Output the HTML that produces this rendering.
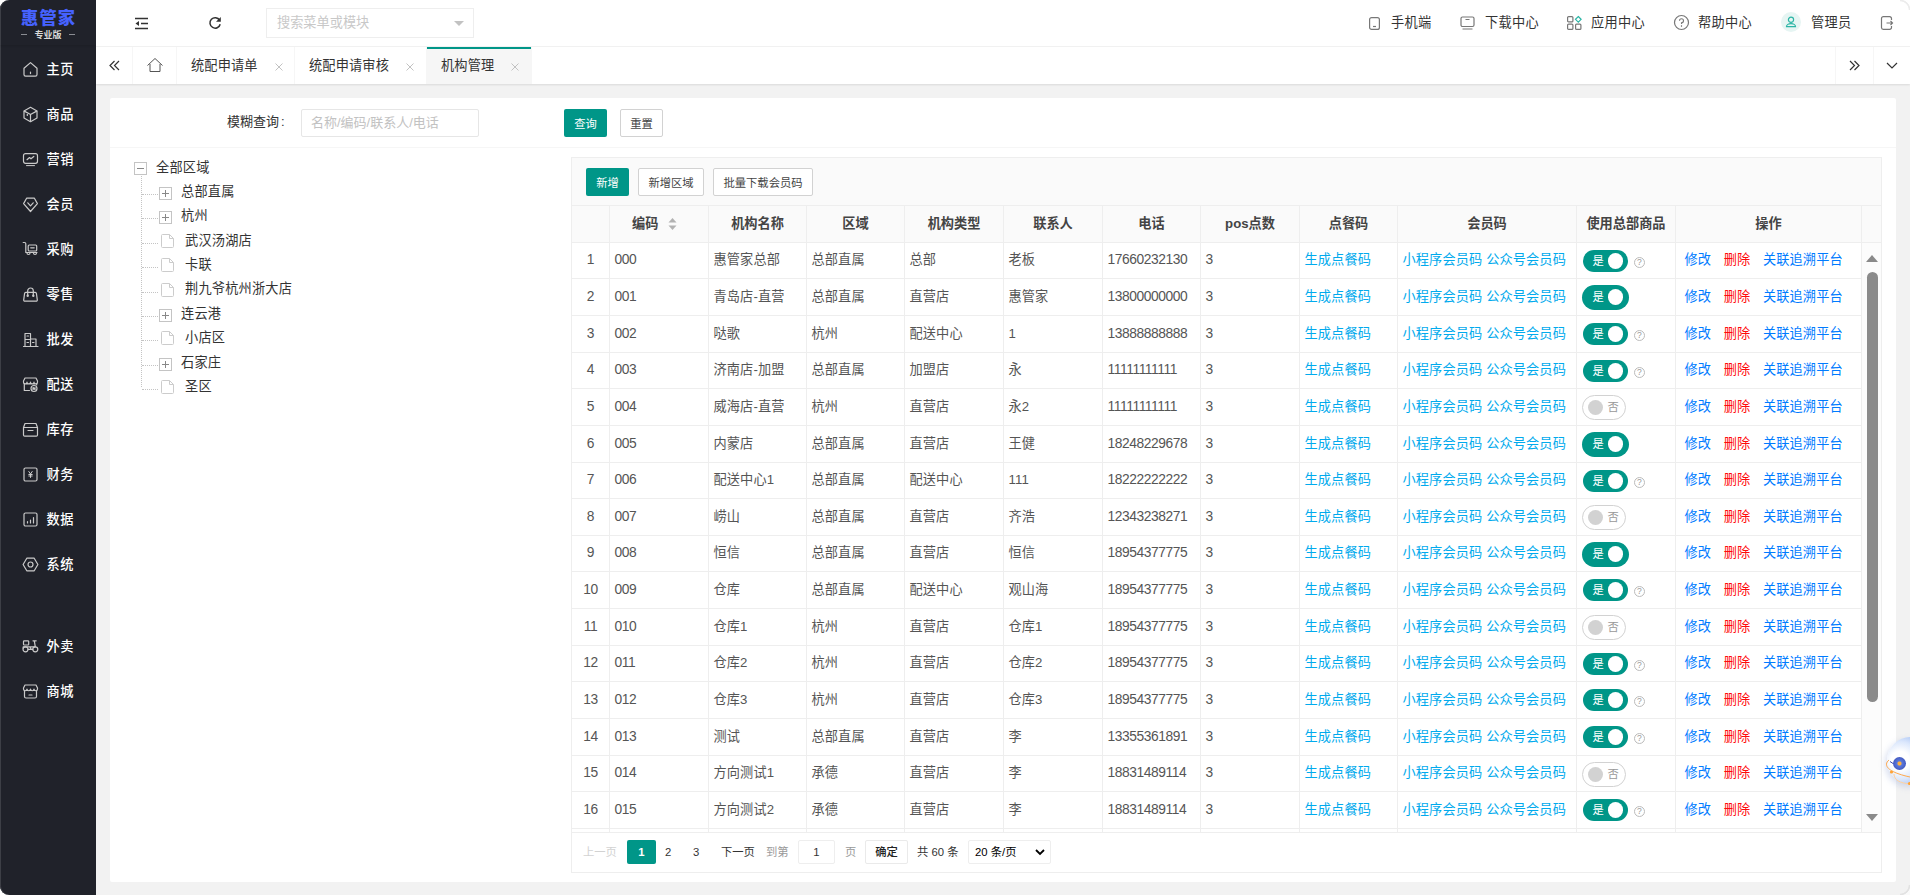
<!DOCTYPE html><html lang="zh-CN"><head><meta charset="utf-8"><title>惠管家</title><style>
*{box-sizing:border-box;margin:0;padding:0}
html,body{width:1910px;height:895px;overflow:hidden}
body{background:#f2f2f2;font-family:"Liberation Sans","Noto Sans CJK SC",sans-serif;font-size:13px;color:#333;position:relative}
.abs{position:absolute}
#sidebg{position:absolute;left:0;top:0;width:96px;height:895px;background:#fff}
#side{position:absolute;left:0;top:0;width:96px;height:895px;background:#20222a;border-radius:9px 0 0 9px;box-shadow:inset 1px 0 0 #3d3f46}
#logo{position:absolute;left:0;top:0;width:96px;height:45px;box-shadow:0 1px 2px rgba(0,0,0,.12)}
#logo .t1{position:absolute;left:0;top:6px;width:96px;text-align:center;color:#4662ff;font-size:17.2px;font-weight:900;line-height:24px;letter-spacing:1.1px;padding-left:1.1px}
#logo .t2{position:absolute;left:0;top:28.5px;width:96px;text-align:center;color:#d8d8d8;font-size:9px;font-weight:700;line-height:12px}
#logo .d{position:absolute;top:34px;width:6px;height:1px;background:#8a8c92}
.mi{position:absolute;left:0;width:96px;height:45px;color:#fff;font-size:13.2px;font-weight:500;line-height:48px}
.mi svg{position:absolute;left:22px;top:15px;width:17px;height:17px;overflow:visible}
.mi span{position:absolute;left:46.5px;top:0;letter-spacing:.6px}
#hd{position:absolute;left:96px;top:0;width:1814px;height:47px;background:#fff;border-bottom:1px solid #f2f2f2}
#hd .sch{position:absolute;left:170px;top:8px;width:208px;height:30px;border:1px solid #eee;color:#c8c8c8;font-size:13.2px;line-height:28px;padding-left:10px}
#hd .sch i{position:absolute;right:9px;top:12px;width:0;height:0;border:5px solid transparent;border-top:5px solid #c2c2c2;border-bottom:0}
.hi{position:absolute;top:0;height:46px;line-height:45px;font-size:13.2px;color:#333;white-space:nowrap;letter-spacing:.3px}
#tabs{position:absolute;left:96px;top:47px;width:1814px;height:37px;background:#fff;box-shadow:0 1px 2px rgba(0,0,0,.1)}
.tb{position:absolute;top:0;height:37px;border-right:1px solid #f6f6f6;line-height:38px;font-size:13.2px;color:#333;white-space:nowrap;letter-spacing:.15px}
.tb .x{position:absolute;top:15.5px;width:8px;height:8px}
.tb.on{background:#f6f6f6}
.tb.on:before{content:"";position:absolute;left:0;top:0;width:100%;height:2px;background:#009688}
#panel{position:absolute;left:110px;top:98px;width:1786px;height:784px;background:#fff;border-radius:2px}
#pin{position:absolute;left:0;top:-1px;width:1786px;height:785px}
.btn{position:absolute;height:28px;line-height:30px;text-align:center;font-size:11.3px;border-radius:2px;white-space:nowrap}
.btn.g{background:#009688;color:#fff}
.btn.w{background:#fff;border:1px solid #d2d2d2;color:#444;line-height:28px}
.inp{position:absolute;border:1px solid #e6e6e6;border-radius:2px;background:#fff}
.tr{position:absolute;left:24px;white-space:nowrap;font-size:13.2px;color:#333;line-height:20px;letter-spacing:.2px}
#tbl{position:absolute;left:571px;top:157px;width:1311px;height:716px;border:1px solid #eee;background:#fff;overflow:hidden}
#tool{position:absolute;left:0;top:0;width:1309px;height:48px;background:#fafafa;border-bottom:1px solid #eee}
#th{position:absolute;left:0;top:48px;width:1309px;height:37px;background:#fafafa;border-bottom:1px solid #eee}
.hc{position:absolute;top:0;height:36px;line-height:36px;text-align:center;font-weight:700;font-size:13.2px;color:#444;border-right:1px solid #eee}
.row{position:absolute;left:0;width:1290px;border-bottom:1px solid #eee}
.c{position:absolute;top:0;height:100%;border-right:1px solid #eee;line-height:34px;padding-left:4.5px;font-size:13.2px;color:#555;white-space:nowrap;overflow:hidden;letter-spacing:.12px}
.c.n{letter-spacing:-.42px;font-size:13.8px}
.row.o .c{padding-top:1px}
.lk{color:#01aaed}
.bl{color:#007bff}
.rd{color:#ff0a0a}
.sw{position:absolute;left:5px;top:6px;width:47px;height:25px;border-radius:13px;background:#009688;color:#fff;font-size:11.3px;line-height:25px;padding-left:10.5px}
.sw:after{content:"";position:absolute;left:25.5px;top:4px;width:15.5px;height:15.5px;border-radius:50%;background:#fff}
.sw.s{left:6px;top:7px;width:45px;height:22px;border-radius:11px;line-height:22px;padding-left:9.5px}
.sw.s:after{left:24.5px;top:3px}
.sw.off{background:#fff;border:1px solid #d2d2d2;color:#999;padding-left:24.5px;line-height:23px;width:44px;left:5px;top:6px}
.sw.off:after{left:5px;top:3.5px;width:15px;height:15px;background:#d2d2d2}
.q{position:absolute;left:57px;top:13.5px;width:11px;height:11px;border:1px solid #bbb;border-radius:50%;font-size:8.5px;line-height:9.5px;text-align:center;color:#999}
#pg{position:absolute;left:0;top:675px;width:1309px;height:40px;font-size:11.3px;color:#333}
#pg span{position:absolute;top:0;line-height:39px;white-space:nowrap}
</style></head><body>
<div id="sidebg"></div><div id="side"><div id="logo"><div class="t1">惠管家</div><div class="t2">专业版</div><div class="d" style="left:21px"></div><div class="d" style="left:69px"></div></div>
<div class="mi" style="top:46px"><svg viewBox="0 0 17 17" fill="none" stroke="#cacaca" stroke-width="1.2" stroke-linecap="round" stroke-linejoin="round"><path d="M2 7.2 8.5 1.6 15 7.2V13.6a1.6 1.6 0 0 1-1.6 1.6H3.6A1.6 1.6 0 0 1 2 13.6Z"/><path d="M8.5 11v1.6"/></svg><span>主页</span></div>
<div class="mi" style="top:91px"><svg viewBox="0 0 17 17" fill="none" stroke="#cacaca" stroke-width="1.2" stroke-linecap="round" stroke-linejoin="round"><path d="M8.5 1.3 15 4.9v7.2L8.5 15.7 2 12.1V4.9Z"/><path d="M2.3 5.1 8.5 8.5 14.7 5.1M8.5 8.5V15.5M5.3 6.8V9.5"/></svg><span>商品</span></div>
<div class="mi" style="top:136px"><svg viewBox="0 0 17 17" fill="none" stroke="#cacaca" stroke-width="1.2" stroke-linecap="round" stroke-linejoin="round"><rect x="1.5" y="2.7" width="14" height="9.6" rx="2"/><path d="M4.5 14.6h8" stroke-width="1"/><path d="M5 8.7 7.5 6.5 9 7.8 11.8 5.5"/></svg><span>营销</span></div>
<div class="mi" style="top:181px"><svg viewBox="0 0 17 17" fill="none" stroke="#cacaca" stroke-width="1.2" stroke-linecap="round" stroke-linejoin="round"><path d="M8.5 15.5 1.6 7.6 4.6 2.2H12.4L15.4 7.6Z"/><path d="M5.8 6.8 8.5 9.8 11.2 6.8"/></svg><span>会员</span></div>
<div class="mi" style="top:226px"><svg viewBox="0 0 17 17" fill="none" stroke="#cacaca" stroke-width="1.2" stroke-linecap="round" stroke-linejoin="round"><path d="M1.2 1.5H2.5A1.3 1.3 0 0 1 3.8 2.8V11.5H15"/><rect x="6.2" y="4" width="8.5" height="6" rx="1"/><path d="M8.7 6.8h3.5"/><path d="M5 12A1.5 1.5 0 0 0 8 12M11.5 12A1.5 1.5 0 0 0 14.5 12"/></svg><span>采购</span></div>
<div class="mi" style="top:271px"><svg viewBox="0 0 17 17" fill="none" stroke="#cacaca" stroke-width="1.2" stroke-linecap="round" stroke-linejoin="round"><path d="M3.8 6.3H13.2A1.2 1.2 0 0 1 14.4 7.3L15.3 13.8A1.2 1.2 0 0 1 14.1 15.2H2.9A1.2 1.2 0 0 1 1.7 13.8L2.6 7.3A1.2 1.2 0 0 1 3.8 6.3Z"/><path d="M5.7 9.5V4.8a2.8 2.8 0 0 1 5.6 0V9.5"/><circle cx="5.7" cy="9.7" r=".6"/><circle cx="11.3" cy="9.7" r=".6"/></svg><span>零售</span></div>
<div class="mi" style="top:316px"><svg viewBox="0 0 17 17" fill="none" stroke="#cacaca" stroke-width="1.2" stroke-linecap="round" stroke-linejoin="round"><path d="M1.5 15.5h14.5M3 15V2.5H8.5V15M8.5 8H14V15M3 8.5H8.5M5 5H6.5M5 11.5H6.5M10.5 11.5H12"/></svg><span>批发</span></div>
<div class="mi" style="top:361px"><svg viewBox="0 0 17 17" fill="none" stroke="#cacaca" stroke-width="1.2" stroke-linecap="round" stroke-linejoin="round"><path d="M2.3 7.5V14.5H7.5M14.7 7.5V9"/><path d="M1.5 5 3 2H14L15.5 5V6.2A1.7 1.7 0 0 1 12 6.2 1.7 1.7 0 0 1 8.5 6.2 1.7 1.7 0 0 1 5 6.2 1.7 1.7 0 0 1 1.5 6.2Z"/><circle cx="12" cy="12.5" r="3"/><path d="M11 13.5V11.5L13 13.5V11.5"/></svg><span>配送</span></div>
<div class="mi" style="top:406px"><svg viewBox="0 0 17 17" fill="none" stroke="#cacaca" stroke-width="1.2" stroke-linecap="round" stroke-linejoin="round"><path d="M1.5 6.5 3 2.5H14L15.5 6.5V14A1.2 1.2 0 0 1 14.3 15.2H2.7A1.2 1.2 0 0 1 1.5 14ZM1.5 6.5H15.5M6 9.5H11"/></svg><span>库存</span></div>
<div class="mi" style="top:451px"><svg viewBox="0 0 17 17" fill="none" stroke="#cacaca" stroke-width="1.2" stroke-linecap="round" stroke-linejoin="round"><rect x="2" y="2" width="13" height="13" rx="1.5"/><path d="M6.8 5.5 8.5 8 10.2 5.5M8.5 8V11.5M6.8 8.5H10.2M6.8 10H10.2" stroke-width="1"/></svg><span>财务</span></div>
<div class="mi" style="top:496px"><svg viewBox="0 0 17 17" fill="none" stroke="#cacaca" stroke-width="1.2" stroke-linecap="round" stroke-linejoin="round"><rect x="2" y="2" width="13" height="13" rx="1.5"/><path d="M5.5 12V10.5M8.5 12V9M11.5 12V6.5"/></svg><span>数据</span></div>
<div class="mi" style="top:541px"><svg viewBox="0 0 17 17" fill="none" stroke="#cacaca" stroke-width="1.2" stroke-linecap="round" stroke-linejoin="round"><path d="M4.8 2.2H12.2L15.9 8.5 12.2 14.8H4.8L1.1 8.5Z"/><circle cx="8.5" cy="8.5" r="2.5"/></svg><span>系统</span></div>
<div class="mi" style="top:623px"><svg viewBox="0 0 17 17" fill="none" stroke="#cacaca" stroke-width="1.2" stroke-linecap="round" stroke-linejoin="round"><rect x="1.5" y="2.8" width="5.2" height="4.2" rx=".8"/><path d="M1.2 10V8.8H7.8L9.2 11.3H10.8M11 2.8H14.2M12.3 2.8 13.3 8.8M6 11.3H9.2M7.8 8.8 12.8 8.8"/><circle cx="3.5" cy="11.3" r="2.5"/><circle cx="13.3" cy="11.3" r="2.5"/></svg><span>外卖</span></div>
<div class="mi" style="top:668px"><svg viewBox="0 0 17 17" fill="none" stroke="#cacaca" stroke-width="1.2" stroke-linecap="round" stroke-linejoin="round"><path d="M2.5 7.5V13.5A1.5 1.5 0 0 0 4 15H13A1.5 1.5 0 0 0 14.5 13.5V7.5"/><path d="M1.5 5 3 2H14L15.5 5V6A1.7 1.7 0 0 1 12 6 1.7 1.7 0 0 1 8.5 6 1.7 1.7 0 0 1 5 6 1.7 1.7 0 0 1 1.5 6Z"/><path d="M7 12H10"/></svg><span>商城</span></div>
</div>
<div id="hd">
<svg class="abs" style="left:38px;top:17px" width="15" height="13" viewBox="0 0 15 13"><path d="M1 1.5H14M7 6.5H14M1 11.5H14" stroke="#333" stroke-width="1.5" fill="none"/><path d="M1.5 6.5 5 4V9Z" fill="#333"/></svg>
<svg class="abs" style="left:112px;top:16px" width="14" height="14" viewBox="0 0 14 14"><path d="M11.6 4.2A5.2 5.2 0 1 0 12.2 8.2" stroke="#333" stroke-width="1.5" fill="none"/><path d="M12.8 1V5.8H8Z" fill="#333"/></svg>
<div class="sch">搜索菜单或模块<i></i></div>
<svg class="abs" style="left:1271px;top:15px" width="14" height="16" viewBox="0 0 14 16" fill="none" stroke="#777" stroke-width="1.2"><rect x="2.6" y="2.6" width="9.8" height="11.8" rx="2"/><path d="M6 11.5H9"/></svg>
<div class="hi" style="left:1295px">手机端</div>
<svg class="abs" style="left:1363px;top:15px" width="17" height="16" viewBox="0 0 17 16" fill="none" stroke="#777" stroke-width="1.2"><rect x="2" y="2" width="13" height="9.5" rx="1.5"/><path d="M6.5 4.5H10.5M3.5 14H13.5"/></svg>
<div class="hi" style="left:1389px">下载中心</div>
<svg class="abs" style="left:1470px;top:14px" width="17" height="17" viewBox="0 0 17 17" fill="none" stroke="#777" stroke-width="1.2"><rect x="1.6" y="2.6" width="5.3" height="5.3" rx="1"/><rect x="1.6" y="10.1" width="5.3" height="5.3" rx="1"/><rect x="9.6" y="10.1" width="5.3" height="5.3" rx="1"/><path d="M12.3 2.5 15.1 5.3 12.3 8.1 9.5 5.3Z" stroke="#2bb5a5"/></svg>
<div class="hi" style="left:1495px">应用中心</div>
<svg class="abs" style="left:1577px;top:14px" width="17" height="17" viewBox="0 0 17 17" fill="none" stroke="#777" stroke-width="1.2"><circle cx="8.5" cy="8.5" r="7"/><path d="M6.5 6.8A2 2 0 1 1 8.5 8.8V10" stroke-width="1.1"/><circle cx="8.5" cy="12" r=".7" fill="#555" stroke="none"/></svg>
<div class="hi" style="left:1602px">帮助中心</div>
<div class="abs" style="left:1685px;top:12px;width:20px;height:20px;border-radius:50%;background:#e6f5f3"></div>
<svg class="abs" style="left:1689px;top:16px" width="12" height="12" viewBox="0 0 12 12" fill="none" stroke="#2bb5a5" stroke-width="1.2"><circle cx="6" cy="3.8" r="2.6"/><path d="M1.5 10.6A4.5 3 0 0 1 10.5 10.6Z"/></svg>
<div class="hi" style="left:1715px">管理员</div>
<svg class="abs" style="left:1784px;top:15px" width="15" height="16" viewBox="0 0 15 16" fill="none" stroke="#777" stroke-width="1.2"><path d="M11.5 5V3.5A1.8 1.8 0 0 0 9.7 1.7H3.3A1.8 1.8 0 0 0 1.5 3.5V12.5A1.8 1.8 0 0 0 3.3 14.3H9.7A1.8 1.8 0 0 0 11.5 12.5V11"/><path d="M6.5 8H12.5M10.5 6 12.5 8 10.5 10"/></svg>
</div>
<div id="tabs">
<div class="tb" style="left:0;width:37px"><svg class="abs" style="left:13px;top:13px" width="11" height="11" viewBox="0 0 11 11" fill="none" stroke="#333" stroke-width="1.2"><path d="M5.5 1 1 5.5 5.5 10M10 1 5.5 5.5 10 10"/></svg></div>
<div class="tb" style="left:37px;width:44px"><svg class="abs" style="left:13px;top:10px" width="18" height="17" viewBox="0 0 18 17" fill="none" stroke="#555" stroke-width="1"><path d="M1.5 8.5 9 1.5 16.5 8.5M4 7V14.5H14V7"/></svg></div>
<div class="tb" style="left:81px;width:118px"><span class="abs" style="left:14px">统配申请单</span><svg class="x" style="left:98px" viewBox="0 0 8 8"><path d="M.5.5 7.5 7.5M7.5.5.5 7.5" stroke="#c2c2c2" stroke-width="1" fill="none"/></svg></div>
<div class="tb" style="left:199px;width:132px"><span class="abs" style="left:14px">统配申请审核</span><svg class="x" style="left:111px" viewBox="0 0 8 8"><path d="M.5.5 7.5 7.5M7.5.5.5 7.5" stroke="#c2c2c2" stroke-width="1" fill="none"/></svg></div>
<div class="tb on" style="left:331px;width:105px"><span class="abs" style="left:14px">机构管理</span><svg class="x" style="left:84px" viewBox="0 0 8 8"><path d="M.5.5 7.5 7.5M7.5.5.5 7.5" stroke="#c2c2c2" stroke-width="1" fill="none"/></svg></div>
<div class="tb" style="left:1739px;width:39px;border-left:1px solid #f6f6f6"><svg class="abs" style="left:13px;top:13px" width="11" height="11" viewBox="0 0 11 11" fill="none" stroke="#333" stroke-width="1.2"><path d="M1 1 5.5 5.5 1 10M5.5 1 10 5.5 5.5 10"/></svg></div>
<div class="tb" style="left:1778px;width:36px;border:0"><svg class="abs" style="left:12px;top:15px" width="12" height="7" viewBox="0 0 12 7" fill="none" stroke="#333" stroke-width="1.2"><path d="M1 1 6 6 11 1"/></svg></div>
</div>
<div id="panel"><div id="pin">
<div class="abs" style="left:0;top:50px;width:1786px;height:1px;background:#f6f6f6"></div>
<div class="abs" style="left:117px;top:15px;font-size:13px;line-height:20px;color:#333">模糊查询<span style="margin-left:2px">:</span></div>
<div class="inp" style="left:191px;top:12px;width:178px;height:28px;color:#c2c2c2;font-size:13px;line-height:26px;padding-left:9px">名称/编码/联系人/电话</div>
<div class="btn g" style="left:454px;top:12px;width:43px">查询</div>
<div class="btn w" style="left:510px;top:12px;width:43px">重置</div>
<svg class="abs" style="left:24px;top:65px" width="13" height="13" viewBox="0 0 13 13" fill="none"><rect x=".5" y=".5" width="12" height="12" stroke="#c4c4c4"/><path d="M3 6.5H10" stroke="#888" stroke-width="1"/></svg>
<div class="tr" style="left:46px;top:60.6px">全部区域</div>
<div class="abs" style="left:31px;top:79px;width:0;height:211px;border-left:1px dotted #c4c4c4"></div>
<div class="abs" style="left:32px;top:97px;width:16px;height:0;border-top:1px dotted #c4c4c4"></div>
<svg class="abs" style="left:49px;top:90px" width="13" height="13" viewBox="0 0 13 13" fill="none"><rect x=".5" y=".5" width="12" height="12" stroke="#c4c4c4"/><path d="M3 6.5H10M6.5 3V10" stroke="#888" stroke-width="1"/></svg>
<div class="tr" style="left:71px;top:84.7px">总部直属</div>
<div class="abs" style="left:32px;top:121.4px;width:16px;height:0;border-top:1px dotted #c4c4c4"></div>
<svg class="abs" style="left:49px;top:114px" width="13" height="13" viewBox="0 0 13 13" fill="none"><rect x=".5" y=".5" width="12" height="12" stroke="#c4c4c4"/><path d="M3 6.5H10M6.5 3V10" stroke="#888" stroke-width="1"/></svg>
<div class="tr" style="left:71px;top:109.1px">杭州</div>
<div class="abs" style="left:32px;top:145.8px;width:16px;height:0;border-top:1px dotted #c4c4c4"></div>
<svg class="abs" style="left:51px;top:137px" width="13" height="14" viewBox="0 0 13 14" fill="none" stroke="#ccc"><path d="M1.5.5H8.5L12.5 4.5V12.5a1 1 0 0 1-1 1H1.5a1 1 0 0 1-1-1V1.5a1 1 0 0 1 1-1ZM8.5.5V4.5H12.5"/></svg>
<div class="tr" style="left:75px;top:133.5px">武汉汤湖店</div>
<div class="abs" style="left:32px;top:170.2px;width:16px;height:0;border-top:1px dotted #c4c4c4"></div>
<svg class="abs" style="left:51px;top:161px" width="13" height="14" viewBox="0 0 13 14" fill="none" stroke="#ccc"><path d="M1.5.5H8.5L12.5 4.5V12.5a1 1 0 0 1-1 1H1.5a1 1 0 0 1-1-1V1.5a1 1 0 0 1 1-1ZM8.5.5V4.5H12.5"/></svg>
<div class="tr" style="left:75px;top:157.9px">卡联</div>
<div class="abs" style="left:32px;top:194.6px;width:16px;height:0;border-top:1px dotted #c4c4c4"></div>
<svg class="abs" style="left:51px;top:186px" width="13" height="14" viewBox="0 0 13 14" fill="none" stroke="#ccc"><path d="M1.5.5H8.5L12.5 4.5V12.5a1 1 0 0 1-1 1H1.5a1 1 0 0 1-1-1V1.5a1 1 0 0 1 1-1ZM8.5.5V4.5H12.5"/></svg>
<div class="tr" style="left:75px;top:182.3px">荆九爷杭州浙大店</div>
<div class="abs" style="left:32px;top:219px;width:16px;height:0;border-top:1px dotted #c4c4c4"></div>
<svg class="abs" style="left:49px;top:212px" width="13" height="13" viewBox="0 0 13 13" fill="none"><rect x=".5" y=".5" width="12" height="12" stroke="#c4c4c4"/><path d="M3 6.5H10M6.5 3V10" stroke="#888" stroke-width="1"/></svg>
<div class="tr" style="left:71px;top:206.7px">连云港</div>
<div class="abs" style="left:32px;top:243.4px;width:16px;height:0;border-top:1px dotted #c4c4c4"></div>
<svg class="abs" style="left:51px;top:234px" width="13" height="14" viewBox="0 0 13 14" fill="none" stroke="#ccc"><path d="M1.5.5H8.5L12.5 4.5V12.5a1 1 0 0 1-1 1H1.5a1 1 0 0 1-1-1V1.5a1 1 0 0 1 1-1ZM8.5.5V4.5H12.5"/></svg>
<div class="tr" style="left:75px;top:231.1px">小店区</div>
<div class="abs" style="left:32px;top:267.8px;width:16px;height:0;border-top:1px dotted #c4c4c4"></div>
<svg class="abs" style="left:49px;top:261px" width="13" height="13" viewBox="0 0 13 13" fill="none"><rect x=".5" y=".5" width="12" height="12" stroke="#c4c4c4"/><path d="M3 6.5H10M6.5 3V10" stroke="#888" stroke-width="1"/></svg>
<div class="tr" style="left:71px;top:255.5px">石家庄</div>
<div class="abs" style="left:32px;top:292.2px;width:16px;height:0;border-top:1px dotted #c4c4c4"></div>
<svg class="abs" style="left:51px;top:283px" width="13" height="14" viewBox="0 0 13 14" fill="none" stroke="#ccc"><path d="M1.5.5H8.5L12.5 4.5V12.5a1 1 0 0 1-1 1H1.5a1 1 0 0 1-1-1V1.5a1 1 0 0 1 1-1ZM8.5.5V4.5H12.5"/></svg>
<div class="tr" style="left:75px;top:279.9px">圣区</div>
</div></div>
<div id="tbl"><div id="tool">
<div class="btn g" style="left:14px;top:10px;width:43px">新增</div>
<div class="btn w" style="left:66px;top:10px;width:66px">新增区域</div>
<div class="btn w" style="left:141px;top:10px;width:100px">批量下载会员码</div>
</div><div id="th">
<div class="hc" style="left:0px;width:38px"></div>
<div class="hc" style="left:38px;width:99px;text-align:left;padding-left:22px">编码<svg style="position:absolute;left:58px;top:12px" width="9" height="12" viewBox="0 0 9 12"><path d="M4.5 0 8.5 4.5H.5Z" fill="#b2b2b2"/><path d="M4.5 12 8.5 7.5H.5Z" fill="#b2b2b2"/></svg></div>
<div class="hc" style="left:137px;width:98px">机构名称</div>
<div class="hc" style="left:235px;width:98px">区域</div>
<div class="hc" style="left:333px;width:99px">机构类型</div>
<div class="hc" style="left:432px;width:99px">联系人</div>
<div class="hc" style="left:531px;width:98px">电话</div>
<div class="hc" style="left:629px;width:99px">pos点数</div>
<div class="hc" style="left:728px;width:98px">点餐码</div>
<div class="hc" style="left:826px;width:179px">会员码</div>
<div class="hc" style="left:1005px;width:99px">使用总部商品</div>
<div class="hc" style="left:1104px;width:186px">操作</div>
</div>
<div class="abs" style="left:0;top:85px;width:1290px;height:589px;overflow:hidden">
<div class="row" style="top:0px;height:36px">
<div class="c n" style="left:0px;width:38px;text-align:center;padding-left:0">1</div>
<div class="c n" style="left:38px;width:99px">000</div>
<div class="c" style="left:137px;width:98px">惠管家总部</div>
<div class="c" style="left:235px;width:98px">总部直属</div>
<div class="c" style="left:333px;width:99px">总部</div>
<div class="c" style="left:432px;width:99px">老板</div>
<div class="c n" style="left:531px;width:98px">17660232130</div>
<div class="c n" style="left:629px;width:99px">3</div>
<div class="c lk" style="left:728px;width:98px">生成点餐码</div>
<div class="c lk" style="left:826px;width:179px">小程序会员码 公众号会员码</div>
<div class="c" style="left:1005px;width:99px"><div class="sw s">是</div><div class="q">?</div></div>
<div class="c" style="left:1104px;width:186px;padding-left:8.5px"><span class="bl">修改</span><span class="rd" style="margin-left:12.6px">删除</span><span class="bl" style="margin-left:12.6px">关联追溯平台</span></div>
</div>
<div class="row o" style="top:36px;height:37px">
<div class="c n" style="left:0px;width:38px;text-align:center;padding-left:0">2</div>
<div class="c n" style="left:38px;width:99px">001</div>
<div class="c" style="left:137px;width:98px">青岛店-直营</div>
<div class="c" style="left:235px;width:98px">总部直属</div>
<div class="c" style="left:333px;width:99px">直营店</div>
<div class="c" style="left:432px;width:99px">惠管家</div>
<div class="c n" style="left:531px;width:98px">13800000000</div>
<div class="c n" style="left:629px;width:99px">3</div>
<div class="c lk" style="left:728px;width:98px">生成点餐码</div>
<div class="c lk" style="left:826px;width:179px">小程序会员码 公众号会员码</div>
<div class="c" style="left:1005px;width:99px"><div class="sw">是</div></div>
<div class="c" style="left:1104px;width:186px;padding-left:8.5px"><span class="bl">修改</span><span class="rd" style="margin-left:12.6px">删除</span><span class="bl" style="margin-left:12.6px">关联追溯平台</span></div>
</div>
<div class="row o" style="top:73px;height:37px">
<div class="c n" style="left:0px;width:38px;text-align:center;padding-left:0">3</div>
<div class="c n" style="left:38px;width:99px">002</div>
<div class="c" style="left:137px;width:98px">哒歌</div>
<div class="c" style="left:235px;width:98px">杭州</div>
<div class="c" style="left:333px;width:99px">配送中心</div>
<div class="c" style="left:432px;width:99px">1</div>
<div class="c n" style="left:531px;width:98px">13888888888</div>
<div class="c n" style="left:629px;width:99px">3</div>
<div class="c lk" style="left:728px;width:98px">生成点餐码</div>
<div class="c lk" style="left:826px;width:179px">小程序会员码 公众号会员码</div>
<div class="c" style="left:1005px;width:99px"><div class="sw s">是</div><div class="q">?</div></div>
<div class="c" style="left:1104px;width:186px;padding-left:8.5px"><span class="bl">修改</span><span class="rd" style="margin-left:12.6px">删除</span><span class="bl" style="margin-left:12.6px">关联追溯平台</span></div>
</div>
<div class="row" style="top:110px;height:36px">
<div class="c n" style="left:0px;width:38px;text-align:center;padding-left:0">4</div>
<div class="c n" style="left:38px;width:99px">003</div>
<div class="c" style="left:137px;width:98px">济南店-加盟</div>
<div class="c" style="left:235px;width:98px">总部直属</div>
<div class="c" style="left:333px;width:99px">加盟店</div>
<div class="c" style="left:432px;width:99px">永</div>
<div class="c n" style="left:531px;width:98px">11111111111</div>
<div class="c n" style="left:629px;width:99px">3</div>
<div class="c lk" style="left:728px;width:98px">生成点餐码</div>
<div class="c lk" style="left:826px;width:179px">小程序会员码 公众号会员码</div>
<div class="c" style="left:1005px;width:99px"><div class="sw s">是</div><div class="q">?</div></div>
<div class="c" style="left:1104px;width:186px;padding-left:8.5px"><span class="bl">修改</span><span class="rd" style="margin-left:12.6px">删除</span><span class="bl" style="margin-left:12.6px">关联追溯平台</span></div>
</div>
<div class="row o" style="top:146px;height:37px">
<div class="c n" style="left:0px;width:38px;text-align:center;padding-left:0">5</div>
<div class="c n" style="left:38px;width:99px">004</div>
<div class="c" style="left:137px;width:98px">威海店-直营</div>
<div class="c" style="left:235px;width:98px">杭州</div>
<div class="c" style="left:333px;width:99px">直营店</div>
<div class="c" style="left:432px;width:99px">永2</div>
<div class="c n" style="left:531px;width:98px">11111111111</div>
<div class="c n" style="left:629px;width:99px">3</div>
<div class="c lk" style="left:728px;width:98px">生成点餐码</div>
<div class="c lk" style="left:826px;width:179px">小程序会员码 公众号会员码</div>
<div class="c" style="left:1005px;width:99px"><div class="sw off">否</div></div>
<div class="c" style="left:1104px;width:186px;padding-left:8.5px"><span class="bl">修改</span><span class="rd" style="margin-left:12.6px">删除</span><span class="bl" style="margin-left:12.6px">关联追溯平台</span></div>
</div>
<div class="row o" style="top:183px;height:37px">
<div class="c n" style="left:0px;width:38px;text-align:center;padding-left:0">6</div>
<div class="c n" style="left:38px;width:99px">005</div>
<div class="c" style="left:137px;width:98px">内蒙店</div>
<div class="c" style="left:235px;width:98px">总部直属</div>
<div class="c" style="left:333px;width:99px">直营店</div>
<div class="c" style="left:432px;width:99px">王健</div>
<div class="c n" style="left:531px;width:98px">18248229678</div>
<div class="c n" style="left:629px;width:99px">3</div>
<div class="c lk" style="left:728px;width:98px">生成点餐码</div>
<div class="c lk" style="left:826px;width:179px">小程序会员码 公众号会员码</div>
<div class="c" style="left:1005px;width:99px"><div class="sw">是</div></div>
<div class="c" style="left:1104px;width:186px;padding-left:8.5px"><span class="bl">修改</span><span class="rd" style="margin-left:12.6px">删除</span><span class="bl" style="margin-left:12.6px">关联追溯平台</span></div>
</div>
<div class="row" style="top:220px;height:36px">
<div class="c n" style="left:0px;width:38px;text-align:center;padding-left:0">7</div>
<div class="c n" style="left:38px;width:99px">006</div>
<div class="c" style="left:137px;width:98px">配送中心1</div>
<div class="c" style="left:235px;width:98px">总部直属</div>
<div class="c" style="left:333px;width:99px">配送中心</div>
<div class="c" style="left:432px;width:99px">111</div>
<div class="c n" style="left:531px;width:98px">18222222222</div>
<div class="c n" style="left:629px;width:99px">3</div>
<div class="c lk" style="left:728px;width:98px">生成点餐码</div>
<div class="c lk" style="left:826px;width:179px">小程序会员码 公众号会员码</div>
<div class="c" style="left:1005px;width:99px"><div class="sw s">是</div><div class="q">?</div></div>
<div class="c" style="left:1104px;width:186px;padding-left:8.5px"><span class="bl">修改</span><span class="rd" style="margin-left:12.6px">删除</span><span class="bl" style="margin-left:12.6px">关联追溯平台</span></div>
</div>
<div class="row o" style="top:256px;height:37px">
<div class="c n" style="left:0px;width:38px;text-align:center;padding-left:0">8</div>
<div class="c n" style="left:38px;width:99px">007</div>
<div class="c" style="left:137px;width:98px">崂山</div>
<div class="c" style="left:235px;width:98px">总部直属</div>
<div class="c" style="left:333px;width:99px">直营店</div>
<div class="c" style="left:432px;width:99px">齐浩</div>
<div class="c n" style="left:531px;width:98px">12343238271</div>
<div class="c n" style="left:629px;width:99px">3</div>
<div class="c lk" style="left:728px;width:98px">生成点餐码</div>
<div class="c lk" style="left:826px;width:179px">小程序会员码 公众号会员码</div>
<div class="c" style="left:1005px;width:99px"><div class="sw off">否</div></div>
<div class="c" style="left:1104px;width:186px;padding-left:8.5px"><span class="bl">修改</span><span class="rd" style="margin-left:12.6px">删除</span><span class="bl" style="margin-left:12.6px">关联追溯平台</span></div>
</div>
<div class="row" style="top:293px;height:36px">
<div class="c n" style="left:0px;width:38px;text-align:center;padding-left:0">9</div>
<div class="c n" style="left:38px;width:99px">008</div>
<div class="c" style="left:137px;width:98px">恒信</div>
<div class="c" style="left:235px;width:98px">总部直属</div>
<div class="c" style="left:333px;width:99px">直营店</div>
<div class="c" style="left:432px;width:99px">恒信</div>
<div class="c n" style="left:531px;width:98px">18954377775</div>
<div class="c n" style="left:629px;width:99px">3</div>
<div class="c lk" style="left:728px;width:98px">生成点餐码</div>
<div class="c lk" style="left:826px;width:179px">小程序会员码 公众号会员码</div>
<div class="c" style="left:1005px;width:99px"><div class="sw">是</div></div>
<div class="c" style="left:1104px;width:186px;padding-left:8.5px"><span class="bl">修改</span><span class="rd" style="margin-left:12.6px">删除</span><span class="bl" style="margin-left:12.6px">关联追溯平台</span></div>
</div>
<div class="row o" style="top:329px;height:37px">
<div class="c n" style="left:0px;width:38px;text-align:center;padding-left:0">10</div>
<div class="c n" style="left:38px;width:99px">009</div>
<div class="c" style="left:137px;width:98px">仓库</div>
<div class="c" style="left:235px;width:98px">总部直属</div>
<div class="c" style="left:333px;width:99px">配送中心</div>
<div class="c" style="left:432px;width:99px">观山海</div>
<div class="c n" style="left:531px;width:98px">18954377775</div>
<div class="c n" style="left:629px;width:99px">3</div>
<div class="c lk" style="left:728px;width:98px">生成点餐码</div>
<div class="c lk" style="left:826px;width:179px">小程序会员码 公众号会员码</div>
<div class="c" style="left:1005px;width:99px"><div class="sw s">是</div><div class="q">?</div></div>
<div class="c" style="left:1104px;width:186px;padding-left:8.5px"><span class="bl">修改</span><span class="rd" style="margin-left:12.6px">删除</span><span class="bl" style="margin-left:12.6px">关联追溯平台</span></div>
</div>
<div class="row o" style="top:366px;height:37px">
<div class="c n" style="left:0px;width:38px;text-align:center;padding-left:0">11</div>
<div class="c n" style="left:38px;width:99px">010</div>
<div class="c" style="left:137px;width:98px">仓库1</div>
<div class="c" style="left:235px;width:98px">杭州</div>
<div class="c" style="left:333px;width:99px">直营店</div>
<div class="c" style="left:432px;width:99px">仓库1</div>
<div class="c n" style="left:531px;width:98px">18954377775</div>
<div class="c n" style="left:629px;width:99px">3</div>
<div class="c lk" style="left:728px;width:98px">生成点餐码</div>
<div class="c lk" style="left:826px;width:179px">小程序会员码 公众号会员码</div>
<div class="c" style="left:1005px;width:99px"><div class="sw off">否</div></div>
<div class="c" style="left:1104px;width:186px;padding-left:8.5px"><span class="bl">修改</span><span class="rd" style="margin-left:12.6px">删除</span><span class="bl" style="margin-left:12.6px">关联追溯平台</span></div>
</div>
<div class="row" style="top:403px;height:36px">
<div class="c n" style="left:0px;width:38px;text-align:center;padding-left:0">12</div>
<div class="c n" style="left:38px;width:99px">011</div>
<div class="c" style="left:137px;width:98px">仓库2</div>
<div class="c" style="left:235px;width:98px">杭州</div>
<div class="c" style="left:333px;width:99px">直营店</div>
<div class="c" style="left:432px;width:99px">仓库2</div>
<div class="c n" style="left:531px;width:98px">18954377775</div>
<div class="c n" style="left:629px;width:99px">3</div>
<div class="c lk" style="left:728px;width:98px">生成点餐码</div>
<div class="c lk" style="left:826px;width:179px">小程序会员码 公众号会员码</div>
<div class="c" style="left:1005px;width:99px"><div class="sw s">是</div><div class="q">?</div></div>
<div class="c" style="left:1104px;width:186px;padding-left:8.5px"><span class="bl">修改</span><span class="rd" style="margin-left:12.6px">删除</span><span class="bl" style="margin-left:12.6px">关联追溯平台</span></div>
</div>
<div class="row o" style="top:439px;height:37px">
<div class="c n" style="left:0px;width:38px;text-align:center;padding-left:0">13</div>
<div class="c n" style="left:38px;width:99px">012</div>
<div class="c" style="left:137px;width:98px">仓库3</div>
<div class="c" style="left:235px;width:98px">杭州</div>
<div class="c" style="left:333px;width:99px">直营店</div>
<div class="c" style="left:432px;width:99px">仓库3</div>
<div class="c n" style="left:531px;width:98px">18954377775</div>
<div class="c n" style="left:629px;width:99px">3</div>
<div class="c lk" style="left:728px;width:98px">生成点餐码</div>
<div class="c lk" style="left:826px;width:179px">小程序会员码 公众号会员码</div>
<div class="c" style="left:1005px;width:99px"><div class="sw s">是</div><div class="q">?</div></div>
<div class="c" style="left:1104px;width:186px;padding-left:8.5px"><span class="bl">修改</span><span class="rd" style="margin-left:12.6px">删除</span><span class="bl" style="margin-left:12.6px">关联追溯平台</span></div>
</div>
<div class="row o" style="top:476px;height:37px">
<div class="c n" style="left:0px;width:38px;text-align:center;padding-left:0">14</div>
<div class="c n" style="left:38px;width:99px">013</div>
<div class="c" style="left:137px;width:98px">测试</div>
<div class="c" style="left:235px;width:98px">总部直属</div>
<div class="c" style="left:333px;width:99px">直营店</div>
<div class="c" style="left:432px;width:99px">李</div>
<div class="c n" style="left:531px;width:98px">13355361891</div>
<div class="c n" style="left:629px;width:99px">3</div>
<div class="c lk" style="left:728px;width:98px">生成点餐码</div>
<div class="c lk" style="left:826px;width:179px">小程序会员码 公众号会员码</div>
<div class="c" style="left:1005px;width:99px"><div class="sw s">是</div><div class="q">?</div></div>
<div class="c" style="left:1104px;width:186px;padding-left:8.5px"><span class="bl">修改</span><span class="rd" style="margin-left:12.6px">删除</span><span class="bl" style="margin-left:12.6px">关联追溯平台</span></div>
</div>
<div class="row" style="top:513px;height:36px">
<div class="c n" style="left:0px;width:38px;text-align:center;padding-left:0">15</div>
<div class="c n" style="left:38px;width:99px">014</div>
<div class="c" style="left:137px;width:98px">方向测试1</div>
<div class="c" style="left:235px;width:98px">承德</div>
<div class="c" style="left:333px;width:99px">直营店</div>
<div class="c" style="left:432px;width:99px">李</div>
<div class="c n" style="left:531px;width:98px">18831489114</div>
<div class="c n" style="left:629px;width:99px">3</div>
<div class="c lk" style="left:728px;width:98px">生成点餐码</div>
<div class="c lk" style="left:826px;width:179px">小程序会员码 公众号会员码</div>
<div class="c" style="left:1005px;width:99px"><div class="sw off">否</div></div>
<div class="c" style="left:1104px;width:186px;padding-left:8.5px"><span class="bl">修改</span><span class="rd" style="margin-left:12.6px">删除</span><span class="bl" style="margin-left:12.6px">关联追溯平台</span></div>
</div>
<div class="row o" style="top:549px;height:37px">
<div class="c n" style="left:0px;width:38px;text-align:center;padding-left:0">16</div>
<div class="c n" style="left:38px;width:99px">015</div>
<div class="c" style="left:137px;width:98px">方向测试2</div>
<div class="c" style="left:235px;width:98px">承德</div>
<div class="c" style="left:333px;width:99px">直营店</div>
<div class="c" style="left:432px;width:99px">李</div>
<div class="c n" style="left:531px;width:98px">18831489114</div>
<div class="c n" style="left:629px;width:99px">3</div>
<div class="c lk" style="left:728px;width:98px">生成点餐码</div>
<div class="c lk" style="left:826px;width:179px">小程序会员码 公众号会员码</div>
<div class="c" style="left:1005px;width:99px"><div class="sw s">是</div><div class="q">?</div></div>
<div class="c" style="left:1104px;width:186px;padding-left:8.5px"><span class="bl">修改</span><span class="rd" style="margin-left:12.6px">删除</span><span class="bl" style="margin-left:12.6px">关联追溯平台</span></div>
</div>
<div class="row o" style="top:586px;height:37px">
<div class="c" style="left:0px;width:38px"></div>
<div class="c" style="left:38px;width:99px"></div>
<div class="c" style="left:137px;width:98px"></div>
<div class="c" style="left:235px;width:98px"></div>
<div class="c" style="left:333px;width:99px"></div>
<div class="c" style="left:432px;width:99px"></div>
<div class="c" style="left:531px;width:98px"></div>
<div class="c" style="left:629px;width:99px"></div>
<div class="c" style="left:728px;width:98px"></div>
<div class="c" style="left:826px;width:179px"></div>
<div class="c" style="left:1005px;width:99px"></div>
<div class="c" style="left:1104px;width:186px"></div>
</div>
</div>
<div class="abs" style="left:1290px;top:48px;width:20px;height:36px;background:#fafafa"></div>
<div class="abs" style="left:1290px;top:85px;width:19px;height:589px;background:#fcfcfc"></div>
<div class="abs" style="left:1294.3px;top:97px;width:0;height:0;border:6.7px solid transparent;border-bottom:7px solid #8a8a8a;border-top:0"></div>
<div class="abs" style="left:1294.3px;top:656px;width:0;height:0;border:6.7px solid transparent;border-top:7px solid #8a8a8a;border-bottom:0"></div>
<div class="abs" style="left:1295.2px;top:114px;width:10.6px;height:430px;background:#8b8b8b;border-radius:5.5px"></div>
<div class="abs" style="left:0;top:674px;width:1309px;height:1px;background:#eee"></div>
<div id="pg">
<span style="left:11px;color:#d2d2d2">上一页</span>
<div class="abs" style="left:55px;top:7px;width:29px;height:24px;background:#009688;color:#fff;text-align:center;line-height:24px;border-radius:2px;font-weight:700">1</div>
<span style="left:93px">2</span><span style="left:121px">3</span><span style="left:149px">下一页</span><span style="left:194px;color:#999">到第</span>
<div class="inp" style="left:226px;top:7px;width:37px;height:24px;border-color:#eee;text-align:center;line-height:22px;color:#333">1</div>
<span style="left:273px;color:#999">页</span>
<div class="btn w" style="left:293px;top:7px;width:43px;height:24px;line-height:23px;border-color:#eaeaea;font-weight:500;color:#222">确定</div>
<span style="left:345px">共 60 条</span>
<div class="inp" style="left:396px;top:7px;width:83px;height:24px;border-color:#eee;line-height:22px;padding-left:6px;color:#000">20 条/页<svg class="abs" style="left:66px;top:8px" width="10" height="7" viewBox="0 0 10 7"><path d="M1 1 5 5 9 1" stroke="#000" stroke-width="1.8" fill="none"/></svg></div>
</div>
</div>
<div class="abs" style="left:1887px;top:737px;width:47px;height:47px;border-radius:50%;background:radial-gradient(circle at 28% 50%,#fff 0,#fff 22%,#dbe7fc 46%,#8db0f0 80%,#6f97ea 100%);box-shadow:-2px 3px 6px rgba(120,140,200,.28)"></div>
<div class="abs" style="left:1893px;top:757px;width:13px;height:13px;border-radius:50%;background:radial-gradient(circle,#ffb13d 0,#ffb13d 16%,#5a78dc 28%,#3345ae 100%)"></div>
<svg class="abs" style="left:1880px;top:750px" width="30" height="40" viewBox="0 0 30 40" fill="none"><path d="M9 10C3 15 7 22 30 27" stroke="#ffa94d" stroke-width="1"/><path d="M14 24C14 30 20 33 30 34" stroke="#ffd2a0" stroke-width="1"/><circle cx="11.5" cy="22" r="1.6" fill="#ffa336"/><circle cx="29.5" cy="33.5" r="1.6" fill="#ffa336"/><path d="M10 11.5 13 13.5" stroke="#3345ae" stroke-width="1"/></svg>
<div class="abs" style="left:1900px;top:0;width:10px;height:10px;background:radial-gradient(circle at 0 100%,rgba(255,255,255,0) 8.3px,#ececec 9px,#ececec 10px,#fff 10.7px)"></div>
<div class="abs" style="left:1900px;top:885px;width:10px;height:10px;background:radial-gradient(circle at 0 0,rgba(242,242,242,0) 8.3px,#e2e2e2 9px,#e2e2e2 10px,#fafafa 10.7px)"></div>
</body></html>
